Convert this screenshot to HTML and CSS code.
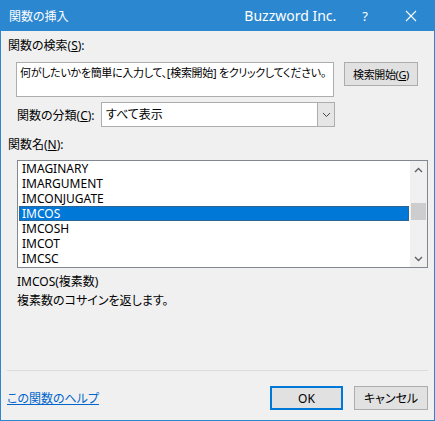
FILE: index.html
```html
<!DOCTYPE html>
<html lang="ja">
<head>
    <meta charset="UTF-8">
    <title>関数の挿入</title>
    <link rel="stylesheet" href="styles.css">
</head>
<body>
    <div class="window">
        <div class="titlebar">
            <span class="title">関数の挿入</span>
            <span class="brand">Buzzword Inc.</span>
            <span class="help">?</span>
            <span class="close">
                <svg width="12" height="12" viewBox="0 0 12 12"><path d="M1 1 L11 11 M11 1 L1 11" stroke="#fff" stroke-width="1.1" fill="none"/></svg>
            </span>
        </div>

        <div class="content">
            <div class="label">関数の検索(<u>S</u>):</div>
            <div class="searchRow">
                <div class="searchBox">何がしたいかを簡単に入力して、[検索開始] をクリックしてください。</div>
                <button class="winButton searchButton">検索開始(<u>G</u>)</button>
            </div>

            <div class="categoryRow">
                <span class="catLabel">関数の分類(<u>C</u>):</span>
                <div class="select">
                    <span class="selectValue">すべて表示</span>
                    <span class="selectArrow">
                        <svg width="9" height="6" viewBox="0 0 9 6"><path d="M1 1 L4.5 4.5 L8 1" stroke="#444" stroke-width="1" fill="none"/></svg>
                    </span>
                </div>
            </div>

            <div class="label nameLabel">関数名(<u>N</u>):</div>
            <div class="listbox">
                <ul class="items">
                    <li>IMAGINARY</li>
                    <li>IMARGUMENT</li>
                    <li>IMCONJUGATE</li>
                    <li class="selected">IMCOS</li>
                    <li>IMCOSH</li>
                    <li>IMCOT</li>
                    <li>IMCSC</li>
                </ul>
                <div class="scrollbar">
                    <span class="arrow">
                        <svg width="9" height="6" viewBox="0 0 9 6"><path d="M1 5 L4.5 1.5 L8 5" stroke="#606060" stroke-width="1.4" fill="none"/></svg>
                    </span>
                    <div class="track"><div class="thumb"></div></div>
                    <span class="arrow">
                        <svg width="9" height="6" viewBox="0 0 9 6"><path d="M1 1 L4.5 4.5 L8 1" stroke="#606060" stroke-width="1.4" fill="none"/></svg>
                    </span>
                </div>
            </div>

            <div class="desc syntax">IMCOS(複素数)</div>
            <div class="desc">複素数のコサインを返します。</div>
        </div>

        <div class="footer">
            <a href="#" class="helpLink">この関数のヘルプ</a>
            <button class="winButton okButton">OK</button>
            <button class="winButton">キャンセル</button>
        </div>
    </div>
</body>
</html>
```

FILE: styles.css
```css
* {
    box-sizing: border-box;
    font-family: "Noto Sans", "Noto Sans CJK JP", sans-serif;
    font-feature-settings: "palt";
}

body {
    margin: 0;
    background-color: #f0f0f0;
    color: #000;
    font-size: 12px;
}

u {
    text-decoration: underline;
    text-underline-offset: 1px;
}

.window {
    width: 435px;
    height: 421px;
    display: flex;
    flex-direction: column;
    border: 1px solid #2b87cf;
    border-top: none;
    background-color: #f0f0f0;
}

/* title bar */
.titlebar {
    height: 31px;
    flex-shrink: 0;
    display: flex;
    align-items: center;
    background-color: #2b87cf;
    color: #fff;
    padding-left: 9px;
    margin: 0 -1px;
}

.title {
    font-size: 12px;
    flex: 1;
}

.brand {
    font-size: 14px;
    margin-right: 26px;
}

.help {
    font-size: 13px;
    margin-right: 37px;
}

.close {
    display: flex;
    margin-right: 18px;
}

/* main area */
.content {
    padding: 0 7px;
    flex: 1;
}

.label {
    height: 16px;
    line-height: 16px;
    margin-top: 7px;
}

.searchRow {
    display: flex;
    align-items: flex-start;
    margin-top: 8px;
    padding-left: 8px;
}

.searchBox {
    width: 318px;
    height: 35px;
    background-color: #fff;
    border: 1px solid #adadad;
    padding: 2px 3px;
    font-size: 11px;
    letter-spacing: -0.3px;
    line-height: 16px;
    white-space: nowrap;
    overflow: hidden;
}

.winButton {
    background-color: #e1e1e1;
    border: 1px solid #adadad;
    height: 24px;
    font-size: 12px;
    padding: 0;
    color: #000;
}

.searchButton {
    width: 74px;
    margin-left: 10px;
    font-size: 11px;
    letter-spacing: -0.4px;
}

.categoryRow {
    display: flex;
    align-items: center;
    margin-top: 5px;
    padding-left: 9px;
}

.catLabel {
    width: 84px;
}

.select {
    width: 234px;
    height: 25px;
    display: flex;
    background-color: #fff;
    border: 1px solid #adadad;
}

.selectValue {
    flex: 1;
    line-height: 23px;
    padding-left: 4px;
}

.selectArrow {
    width: 17px;
    display: flex;
    align-items: center;
    justify-content: center;
    background-color: #e5e5e5;
    border-left: 1px solid #adadad;
}

.nameLabel {
    margin-top: 10px;
}

.listbox {
    display: flex;
    width: 411px;
    height: 108px;
    margin-top: 7px;
    margin-left: 9px;
    background-color: #fff;
    border: 1px solid #828790;
}

.items {
    list-style: none;
    margin: 0;
    padding: 0 1px 0 1px;
    flex: 1;
}

.items li {
    height: 15px;
    line-height: 15px;
    padding-left: 3px;
    white-space: nowrap;
}

.items li.selected {
    background-color: #0078d7;
    color: #fff;
    outline: 1px dotted #555;
    outline-offset: -1px;
}

.scrollbar {
    width: 17px;
    display: flex;
    flex-direction: column;
    background-color: #f0f0f0;
}

.arrow {
    height: 17px;
    display: flex;
    align-items: center;
    justify-content: center;
}

.track {
    flex: 1;
    padding-top: 25px;
}

.thumb {
    height: 17px;
    margin: 0 1px;
    background-color: #cdcdcd;
}

.desc {
    height: 19px;
    line-height: 19px;
    padding-left: 9px;
}

.syntax {
    margin-top: 4px;
}

/* bottom buttons */
.footer {
    display: flex;
    align-items: center;
    margin: 0 6px 10px 6px;
    padding-top: 15px;
    border-top: 1px solid #dcdcdc;
}

.helpLink {
    flex: 1;
    color: #0066cc;
    text-decoration: underline;
}

.okButton {
    width: 73px;
    border: 2px solid #0078d7;
    margin-right: 11px;
}

.footer .winButton:last-child {
    width: 74px;
}
```
